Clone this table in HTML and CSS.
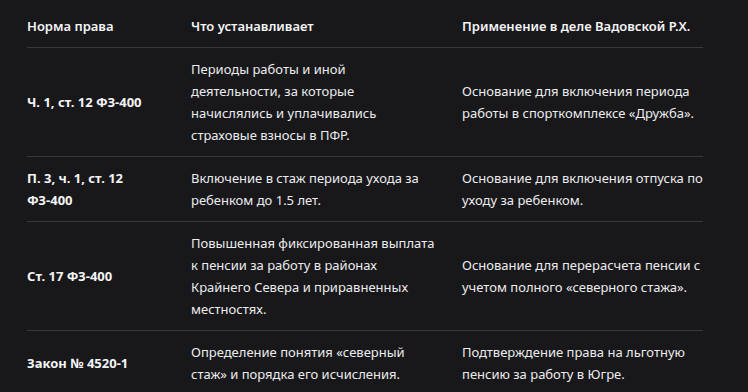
FILE: index.html
```html
<!DOCTYPE html>
<html lang="ru">
<head>
<meta charset="utf-8">
<link rel="stylesheet" href="styles.css">
</head>
<body>
<div class="wrap">
<table class="norms">
<colgroup><col class="c1"><col class="c2"><col class="c3"></colgroup>
<thead>
<tr><th>Норма права</th><th>Что устанавливает</th><th>Применение в деле Вадовской Р.Х.</th></tr>
</thead>
<tbody>
<tr><td class="law">Ч. 1, ст. 12 ФЗ-400</td><td>Периоды работы и иной деятельности, за которые начислялись и уплачивались страховые взносы в ПФР.</td><td>Основание для включения периода работы в спорткомплексе «Дружба».</td></tr>
<tr><td class="law">П. 3, ч. 1, ст. 12 ФЗ-400</td><td>Включение в стаж периода ухода за ребенком до 1.5 лет.</td><td>Основание для включения отпуска по уходу за ребенком.</td></tr>
<tr><td class="law">Ст. 17 ФЗ-400</td><td>Повышенная фиксированная выплата к пенсии за работу в районах Крайнего Севера и приравненных местностях.</td><td>Основание для перерасчета пенсии с учетом полного «северного стажа».</td></tr>
<tr><td class="law">Закон № 4520-1</td><td>Определение понятия «северный стаж» и порядка его исчисления.</td><td>Подтверждение права на льготную пенсию за работу в Югре.</td></tr>
</tbody>
</table>
</div>
</body>
</html>
```
FILE: styles.css
```css
html, body {
  margin: 0;
  padding: 0;
  background: #18181b;
}
.wrap {
  padding: 5px 45px 0 27px;
}
.norms {
  width: 676px;
  border-collapse: collapse;
  table-layout: fixed;
  font-family: "Noto Sans", "Open Sans", sans-serif;
  font-size: 13px;
  line-height: 22px;
  color: #ececee;
}
.c1 { width: 164px; }
.c2 { width: 271px; }
.c3 { width: 241px; }
.norms th, .norms td {
  text-align: left;
  vertical-align: middle;
  padding: 10px 24px 10px 0;
  border-bottom: 1px solid #38383c;
}
.norms th:last-child, .norms td:last-child {
  padding-right: 0;
}
.norms th {
  font-weight: 600;
  color: #f4f4f5;
}
.norms td.law {
  font-weight: 700;
  color: #f4f4f5;
}
```
